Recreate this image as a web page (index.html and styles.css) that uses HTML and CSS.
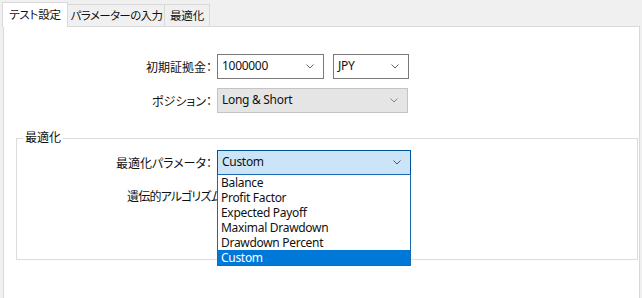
FILE: index.html
```html
<!DOCTYPE html>
<html lang="ja">
<head>
    <meta charset="UTF-8">
    <title>テスト設定</title>
    <link rel="stylesheet" href="styles.css">
</head>
<body>
    <!-- Tabs -->
    <div class="tabs">
        <div class="tab active">テスト設定</div>
        <div class="tab tab-params">パラメーターの入力</div>
        <div class="tab tab-opt">最適化</div>
    </div>

    <div class="panel">
        <div class="form main-form">
            <div class="label">初期証拠金：</div>
            <div class="combo-pair">
                <div class="combo deposit">
                    <span>1000000</span>
                    <svg class="chevron" width="8" height="5" viewBox="0 0 8 5"><polyline points="0.5,0.5 4,4 7.5,0.5" fill="none" stroke="#666" stroke-width="1"/></svg>
                </div>
                <div class="combo currency">
                    <span>JPY</span>
                    <svg class="chevron" width="8" height="5" viewBox="0 0 8 5"><polyline points="0.5,0.5 4,4 7.5,0.5" fill="none" stroke="#666" stroke-width="1"/></svg>
                </div>
            </div>

            <div class="label">ポジション：</div>
            <div class="combo position disabled">
                <span>Long &amp; Short</span>
                <svg class="chevron" width="8" height="5" viewBox="0 0 8 5"><polyline points="0.5,0.5 4,4 7.5,0.5" fill="none" stroke="#888" stroke-width="1"/></svg>
            </div>
        </div>

        <!-- Optimization group -->
        <fieldset class="group">
            <legend>最適化</legend>
            <div class="form group-form">
                <div class="label">最適化パラメータ：</div>
                <div class="combo-wrap">
                    <div class="combo criterion focused">
                        <span>Custom</span>
                        <svg class="chevron" width="8" height="5" viewBox="0 0 8 5"><polyline points="0.5,0.5 4,4 7.5,0.5" fill="none" stroke="#555" stroke-width="1"/></svg>
                    </div>
                    <ul class="dropdown">
                        <li>Balance</li>
                        <li>Profit Factor</li>
                        <li>Expected Payoff</li>
                        <li>Maximal Drawdown</li>
                        <li>Drawdown Percent</li>
                        <li class="selected">Custom</li>
                    </ul>
                </div>

                <!-- label is cut off by the open list -->
                <div class="label label-under">遺伝的アルゴリズム：</div>
            </div>
        </fieldset>
    </div>
</body>
</html>
```

FILE: styles.css
```css
* {
    margin: 0;
    padding: 0;
    box-sizing: border-box;
}

html, body {
    width: 100%;
    height: 100%;
    overflow: hidden;
}

body {
    background: #f0f0f0;
    font-family: "Noto Sans", "Noto Sans CJK JP", sans-serif;
    font-size: 12px;
    font-feature-settings: "palt";
    color: #111;
}

/* Tabs */
.tabs {
    display: flex;
    align-items: flex-end;
    height: 27px;
    padding-left: 2px;
    margin-bottom: -1px;
    position: relative;
    z-index: 1;
}

.tab {
    height: 22px;
    margin-bottom: 1px;
    border: 1px solid #d9d9d9;
    border-bottom: none;
    border-left: none;
    background: #f0f0f0;
    display: flex;
    align-items: center;
    justify-content: center;
    line-height: 1;
    white-space: nowrap;
    font-size: 11.5px;
    letter-spacing: -0.2px;
}

.tab.active {
    width: 66px;
    height: 25px;
    margin-bottom: 0;
    border-left: 1px solid #d9d9d9;
    background: #fff;
    padding-bottom: 1px;
}

.tab-params {
    width: 97px;
    padding-left: 1px;
    letter-spacing: -0.6px;
}

.tab-opt {
    width: 45px;
}

/* Panel */
.panel {
    margin: 0 2px 0 3px;
    height: 300px;
    background: #fff;
    border: 1px solid #d9d9d9;
    border-bottom: none;
    padding-top: 27px;
}

.form {
    display: grid;
    row-gap: 9px;
    align-items: center;
}

.main-form {
    grid-template-columns: 213px auto;
}

.group-form {
    grid-template-columns: 200px auto;
}

.label {
    text-align: right;
    padding-right: 5px;
    white-space: nowrap;
}

.label-under {
    height: 25px;
    line-height: 25px;
    text-align: left;
    padding-left: 110px;
    padding-right: 0;
    overflow: hidden;
    letter-spacing: -0.8px;
}

/* Combo boxes */
.combo-pair {
    display: flex;
    gap: 9px;
}

.combo {
    height: 25px;
    border: 1px solid #7a7a7a;
    background: #fff;
    display: flex;
    align-items: center;
    justify-content: space-between;
    padding: 0 9px 0 4px;
    letter-spacing: -0.3px;
}

.combo span {
    line-height: 1;
    padding-bottom: 1px;
}

.deposit {
    width: 107px;
}

.currency {
    width: 76px;
}

.position {
    width: 191px;
}

.combo.disabled {
    background: #e5e5e5;
    border-color: #c4c4c4;
}

.combo-wrap {
    position: relative;
    width: 194px;
}

.combo.focused {
    background: #cce4f7;
    border-color: #005499;
}

/* Dropdown list */
.dropdown {
    position: absolute;
    top: 24px;
    left: 0;
    width: 194px;
    list-style: none;
    background: #fff;
    border: 1px solid #1a69b5;
    z-index: 5;
    letter-spacing: -0.3px;
}

.dropdown li {
    height: 15px;
    line-height: 15px;
    padding-left: 3px;
}

.dropdown li.selected {
    background: #0078d7;
    color: #fff;
}

/* Group box */
.group {
    margin: 17px 1px 0 12px;
    border: 1px solid #dcdcdc;
    padding: 4px 0 50px 0;
}

.group legend {
    margin-left: 6px;
    padding: 0 2px;
    line-height: 16px;
}
```
